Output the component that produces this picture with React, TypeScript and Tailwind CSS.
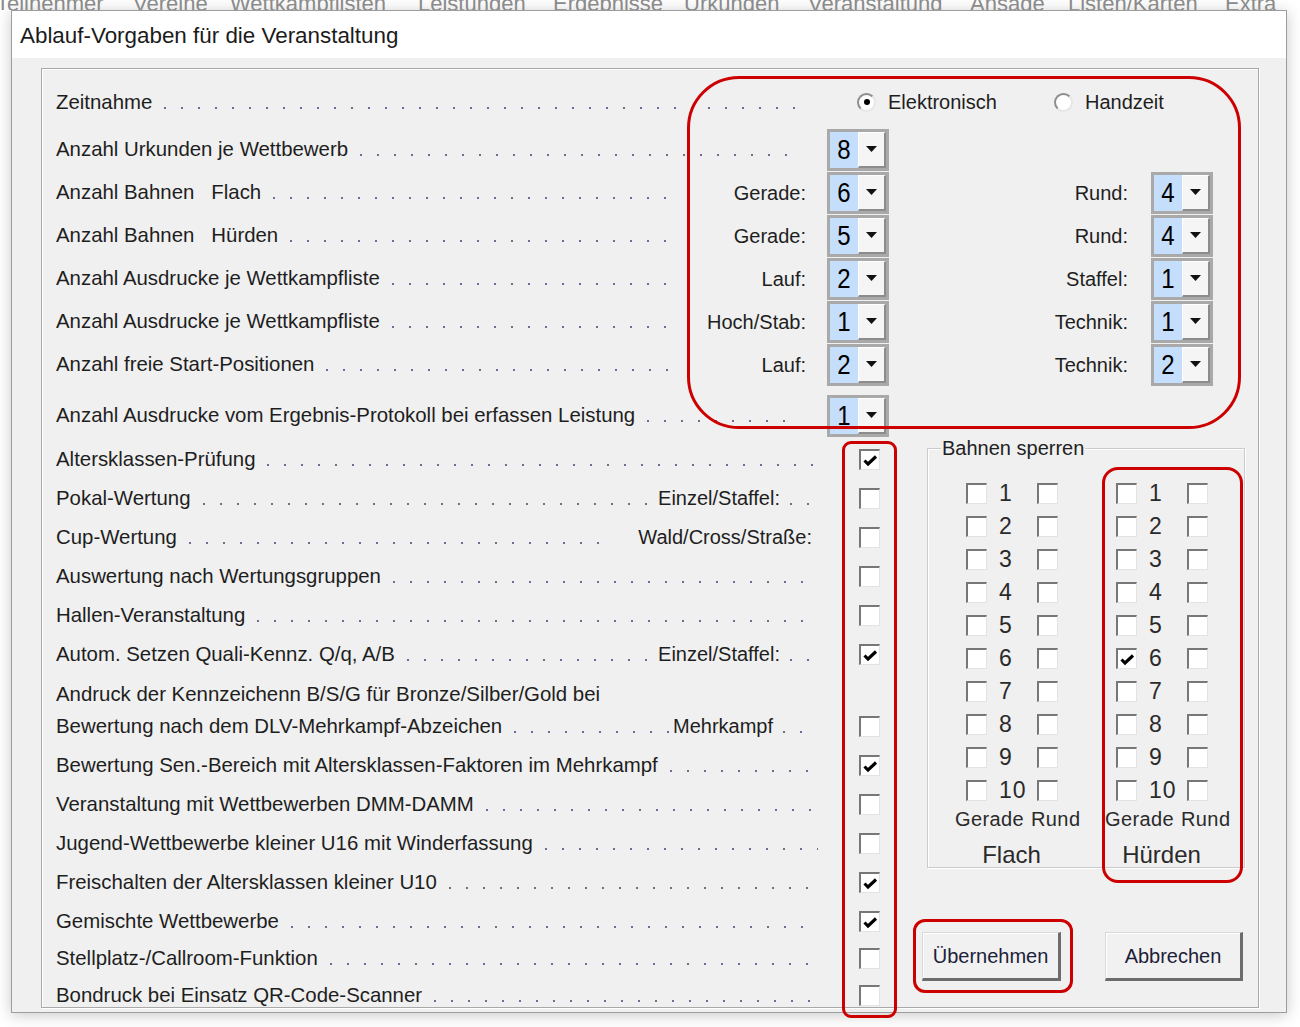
import React from "react";

type TopRowProps = {
  label: string;
  extra?: string;
  sub?: string;
  value: string;
  rightLabel?: string;
  rightValue?: string;
};

type CheckRowProps = {
  label: string;
  sub?: string;
  kind?: "trail" | "plain" | "mehr";
  checked?: boolean;
  h?: string;
};

const menuItems = [
  { label: "Teilnehmer", w: "w-[137px]" },
  { label: "Vereine", w: "w-[97px]" },
  { label: "Wettkampflisten", w: "w-[188px]" },
  { label: "Leistungen", w: "w-[135px]" },
  { label: "Ergebnisse", w: "w-[131px]" },
  { label: "Urkunden", w: "w-[124px]" },
  { label: "Veranstaltung", w: "w-[162px]" },
  { label: "Ansage", w: "w-[98px]" },
  { label: "Listen/Karten", w: "w-[157px]" },
  { label: "Extra", w: "w-[80px]" },
];

const topRows: TopRowProps[] = [
  { label: "Anzahl Urkunden je Wettbewerb", value: "8" },
  { label: "Anzahl Bahnen", extra: "Flach", sub: "Gerade:", value: "6", rightLabel: "Rund:", rightValue: "4" },
  { label: "Anzahl Bahnen", extra: "Hürden", sub: "Gerade:", value: "5", rightLabel: "Rund:", rightValue: "4" },
  { label: "Anzahl Ausdrucke je Wettkampfliste", sub: "Lauf:", value: "2", rightLabel: "Staffel:", rightValue: "1" },
  { label: "Anzahl Ausdrucke je Wettkampfliste", sub: "Hoch/Stab:", value: "1", rightLabel: "Technik:", rightValue: "1" },
  { label: "Anzahl freie Start-Positionen", sub: "Lauf:", value: "2", rightLabel: "Technik:", rightValue: "2" },
];

const lanes = [1, 2, 3, 4, 5, 6, 7, 8, 9, 10];

const Dots = ({ className = "" }: { className?: string }) => (
  <div
    className={`h-[2px] mt-[12px] bg-[linear-gradient(90deg,#7b6891_0_2px,transparent_2px)] bg-[length:17px_2px] ${className}`}
  />
);

const Combo = ({ value }: { value: string }) => (
  <div className="w-[62px] h-[42px] flex border-[3px] border-[#a9a9a9] bg-white">
    <div className="w-[28px] bg-[#c4defc] flex items-center justify-center text-[24px] text-black">
      <span className="inline-block scale-y-[1.15]">{value}</span>
    </div>
    <div className="flex-1 flex items-center justify-center bg-[#f5f5f5] border-t border-l border-t-white border-l-white border-b-2 border-r-2 border-b-[#8c8c8c] border-r-[#8c8c8c]">
      <svg width="11" height="6" viewBox="0 0 11 6">
        <path d="M0 0h11L5.5 6z" fill="#111" />
      </svg>
    </div>
  </div>
);

const Radio = ({ checked }: { checked?: boolean }) => (
  <span className="w-[19px] h-[19px] shrink-0 rounded-full flex items-center justify-center bg-white border-2 border-t-[#8d8d8d] border-l-[#8d8d8d] border-b-[#e6e6e6] border-r-[#e6e6e6]">
    {checked && <span className="w-[6px] h-[6px] rounded-full bg-black" />}
  </span>
);

const Check = ({ checked }: { checked?: boolean }) => (
  <span className="w-[21px] h-[21px] shrink-0 flex items-center justify-center bg-white border-t-2 border-l-2 border-t-[#777777] border-l-[#777777] border-b border-r border-b-[#e3e3e3] border-r-[#e3e3e3]">
    {checked && (
      <svg width="15" height="13" viewBox="0 0 15 13" className="mt-[1px]">
        <path d="M1.5 6.5 L5 10 L13 2.5" fill="none" stroke="#000" strokeWidth="3.1" />
      </svg>
    )}
  </span>
);

const TopRow = ({ label, extra, sub, value, rightLabel, rightValue }: TopRowProps) => (
  <div className="h-[43px] flex items-center">
    <div className={sub ? "w-[614px] flex items-center" : "w-[739px] flex items-center"}>
      <span className="whitespace-nowrap">{label}</span>
      {extra && <span className="ml-[17px] whitespace-nowrap">{extra}</span>}
      <Dots className="flex-1 ml-[12px]" />
    </div>
    {sub ? (
      <>
        <span className="w-[136px] text-right text-[20px]">{sub}</span>
        <div className="ml-[21px]">
          <Combo value={value} />
        </div>
        <span className="w-[239px] text-right text-[20px]">{rightLabel}</span>
        <div className="ml-[23px]">
          <Combo value={rightValue ?? ""} />
        </div>
      </>
    ) : (
      <div className="ml-[32px]">
        <Combo value={value} />
      </div>
    )}
  </div>
);

const CheckRow = ({ label, sub, kind, checked, h = "h-[39px]" }: CheckRowProps) => (
  <div className={`${h} flex items-center`}>
    <div className="w-[770px] flex items-center">
      <span className="whitespace-nowrap">{label}</span>
      {kind === "plain" ? (
        <Dots className="flex-1 ml-[12px] mr-[24px]" />
      ) : (
        <Dots className={sub ? "flex-1 ml-[12px]" : "flex-1 ml-[12px] mr-[8px]"} />
      )}
      {sub && <span className="whitespace-nowrap text-[20px]">{sub}</span>}
      {kind === "trail" && <Dots className="w-[32px] ml-[10px] mr-[4px]" />}
      {kind === "plain" && <span className="w-[14px]" />}
      {kind === "mehr" && <Dots className="w-[26px] ml-[10px] mr-[17px]" />}
    </div>
    <div className="ml-[33px]">
      <Check checked={checked} />
    </div>
  </div>
);

const LaneBlock = ({ n, left }: { n: number; left?: boolean }) => (
  <div className="flex items-center">
    <Check checked={left} />
    <span className="ml-[12px] w-[38px] text-[23px] text-[#2a2a2a] tracking-[1px]">{n}</span>
    <Check />
  </div>
);

const WinButton = ({ children, w }: { children: React.ReactNode; w: string }) => (
  <button
    className={`${w} h-[49px] bg-[#f1f1f1] text-[20px] text-[#1c2139] border-t border-l border-t-[#d9d9d9] border-l-[#d9d9d9] border-b-[3px] border-r-[3px] border-b-[#6c6c6c] border-r-[#6c6c6c] shadow-[inset_1px_1px_0_#ffffff]`}
  >
    {children}
  </button>
);

export default function App() {
  return (
    <div className="relative w-[1300px] h-[1027px] overflow-hidden bg-white font-['Liberation_Sans',Arial,sans-serif] text-[#1e1e1e]">
      {/* menu bar behind the dialog */}
      <div className="h-[10px] overflow-hidden">
        <div className="flex -mt-[13px] -ml-[4px] text-[22px] text-[#8a8a8a] whitespace-nowrap">
          {menuItems.map((m) => (
            <span key={m.label} className={`${m.w} shrink-0`}>
              {m.label}
            </span>
          ))}
        </div>
      </div>

      {/* dialog */}
      <div className="ml-[11px] w-[1276px] h-[1003px] flex flex-col border border-[#9d9d9d] shadow-[0_2px_14px_rgba(0,0,0,0.22)]">
        <div className="h-[47px] shrink-0 bg-white flex items-center pl-[8px] pt-[2px] text-[22.4px] text-[#1b1b1b]">
          Ablauf-Vorgaben für die Veranstaltung
        </div>
        <div className="flex-1 bg-[#f0f0f0] pt-[10px] pl-[29px] pr-[27px]">
          <div className="h-[940px] border border-[#a9a9a9] shadow-[inset_1px_1px_0_#ffffff,1px_1px_0_#ffffff] pt-[15px] pl-[14px] text-[20.4px]">
            {/* Zeitnahme */}
            <div className="h-[36px] flex items-center">
              <div className="w-[739px] flex items-center">
                <span>Zeitnahme</span>
                <Dots className="flex-1 ml-[12px]" />
              </div>
              <div className="ml-[62px] flex items-center text-[20px]">
                <Radio checked />
                <span className="ml-[12px]">Elektronisch</span>
              </div>
              <div className="ml-[57px] flex items-center text-[20px]">
                <Radio />
                <span className="ml-[12px]">Handzeit</span>
              </div>
            </div>

            <div className="mt-[8px]">
              {topRows.map((r, i) => (
                <TopRow key={i} {...r} />
              ))}
            </div>

            <div className="mt-[8px]">
              <TopRow label="Anzahl Ausdrucke vom Ergebnis-Protokoll bei erfassen Leistung" value="1" />
            </div>

            {/* lower part */}
            <div className="mt-[3px] flex">
              <div className="w-[824px] shrink-0">
                <CheckRow label="Altersklassen-Prüfung" checked />
                <CheckRow label="Pokal-Wertung" sub="Einzel/Staffel:" kind="trail" />
                <CheckRow label="Cup-Wertung" sub="Wald/Cross/Straße:" kind="plain" />
                <CheckRow label="Auswertung nach Wertungsgruppen" />
                <CheckRow label="Hallen-Veranstaltung" />
                <CheckRow label="Autom. Setzen Quali-Kennz. Q/q, A/B" sub="Einzel/Staffel:" kind="trail" checked />
                <div className="mt-[4px] h-[32px] flex items-center">
                  Andruck der Kennzeichenn B/S/G für Bronze/Silber/Gold bei
                </div>
                <CheckRow label="Bewertung nach dem DLV-Mehrkampf-Abzeichen" sub="Mehrkampf" kind="mehr" h="h-[32px]" />
                <div className="mt-[4px]">
                  <CheckRow label="Bewertung Sen.-Bereich mit Altersklassen-Faktoren im Mehrkampf" checked />
                  <CheckRow label="Veranstaltung mit Wettbewerben DMM-DAMM" />
                  <CheckRow label="Jugend-Wettbewerbe kleiner U16 mit Winderfassung" />
                  <CheckRow label="Freischalten der Altersklassen kleiner U10" checked />
                  <CheckRow label="Gemischte Wettbewerbe" checked />
                  <CheckRow label="Stellplatz-/Callroom-Funktion" h="h-[35px]" />
                  <CheckRow label="Bondruck bei Einsatz QR-Code-Scanner" h="h-[38px]" />
                </div>
              </div>

              <div className="ml-[42px] w-[323px] shrink-0 pt-[8px]">
                <div className="ml-[5px] w-[318px] h-[420px] border border-[#cbcbcb] shadow-[inset_1px_1px_0_#ffffff,1px_1px_0_#ffffff]">
                  <div className="-mt-[13px] ml-[13px] w-fit px-[1px] bg-[#f0f0f0] text-[20px] leading-[24px] text-[#222]">
                    Bahnen sperren
                  </div>
                  <div className="mt-[17px]">
                    {lanes.map((n) => (
                      <div key={n} className="h-[33px] flex items-center pl-[38px]">
                        <LaneBlock n={n} />
                        <div className="ml-[58px]">
                          <LaneBlock n={n} left={n === 6} />
                        </div>
                      </div>
                    ))}
                  </div>
                  <div className="h-[24px] flex items-center pl-[27px] text-[20px] text-[#2a2a2a] tracking-[0.4px]">
                    <span className="w-[76px]">Gerade</span>
                    <span className="w-[74px]">Rund</span>
                    <span className="w-[76px]">Gerade</span>
                    <span>Rund</span>
                  </div>
                  <div className="mt-[9px] h-[30px] flex items-center pl-[38px] text-[24px] text-[#2a2a2a]">
                    <span className="w-[91px] text-center">Flach</span>
                    <span className="ml-[59px] w-[91px] text-center">Hürden</span>
                  </div>
                </div>

                <div className="mt-[64px] flex">
                  <WinButton w="w-[139px]">Übernehmen</WinButton>
                  <div className="ml-[44px]">
                    <WinButton w="w-[138px]">Abbrechen</WinButton>
                  </div>
                </div>
              </div>
            </div>
          </div>
        </div>
      </div>

      {/* red annotation marks lying over the screenshot */}
      <div className="pointer-events-none absolute left-[687px] top-[76px] w-[554px] h-[353px] rounded-[52px] border-[3px] border-[#cc0000]" />
      <div className="pointer-events-none absolute left-[842px] top-[441px] w-[55px] h-[577px] rounded-[9px] border-[3px] border-[#cc0000]" />
      <div className="pointer-events-none absolute left-[1102px] top-[467px] w-[141px] h-[416px] rounded-[16px] border-[3px] border-[#cc0000]" />
      <div className="pointer-events-none absolute left-[913px] top-[919px] w-[160px] h-[74px] rounded-[12px] border-[3px] border-[#cc0000]" />
    </div>
  );
}
